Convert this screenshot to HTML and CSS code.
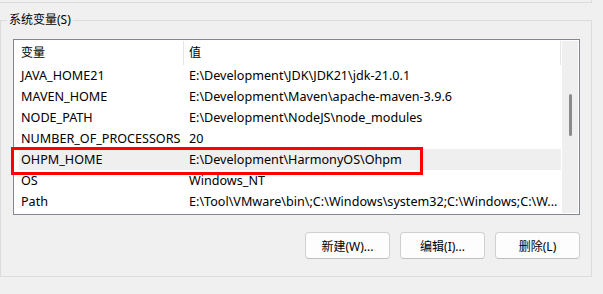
FILE: index.html
```html
<!DOCTYPE html>
<html lang="zh-CN">
<head>
    <meta charset="UTF-8">
    <title>环境变量</title>
    <link rel="stylesheet" href="styles.css">
</head>
<body>
    <div class="prev-group"></div>

    <fieldset class="group">
        <legend>系统变量(S)</legend>

        <div class="listbox">
            <div class="list">
                <div class="list-head">
                    <div class="col-name">变量</div>
                    <div class="col-value">值</div>
                </div>
                <div class="row">
                    <div class="col-name">JAVA_HOME21</div>
                    <div class="col-value">E:\Development\JDK\JDK21\jdk-21.0.1</div>
                </div>
                <div class="row">
                    <div class="col-name">MAVEN_HOME</div>
                    <div class="col-value">E:\Development\Maven\apache-maven-3.9.6</div>
                </div>
                <div class="row">
                    <div class="col-name">NODE_PATH</div>
                    <div class="col-value">E:\Development\NodeJS\node_modules</div>
                </div>
                <div class="row">
                    <div class="col-name">NUMBER_OF_PROCESSORS</div>
                    <div class="col-value">20</div>
                </div>
                <div class="row selected">
                    <div class="col-name">OHPM_HOME</div>
                    <div class="col-value">E:\Development\HarmonyOS\Ohpm</div>
                    <span class="mark"></span>
                </div>
                <div class="row">
                    <div class="col-name">OS</div>
                    <div class="col-value">Windows_NT</div>
                </div>
                <div class="row">
                    <div class="col-name">Path</div>
                    <div class="col-value">E:\Tool\VMware\bin\;C:\Windows\system32;C:\Windows;C:\W...</div>
                </div>
            </div>
            <div class="scrollbar">
                <div class="thumb"></div>
            </div>
        </div>

        <div class="buttons">
            <button type="button">新建(W)...</button>
            <button type="button">编辑(I)...</button>
            <button type="button">删除(L)</button>
        </div>
    </fieldset>
</body>
</html>
```

FILE: styles.css
```css
body {
    margin: 0;
    background-color: #f0f0f0;
    font-family: 'Noto Sans', 'Noto Sans CJK SC', sans-serif;
    font-size: 12px;
    color: #000;
    width: 603px;
    height: 294px;
    overflow: hidden;
}

.prev-group {
    width: 591px;
    height: 2px;
    border-bottom: 1px solid #dcdcdc;
    border-right: 1px solid #dcdcdc;
}

.group {
    box-sizing: border-box;
    width: 592px;
    min-width: 0;
    margin: 9px 0 0 0;
    padding: 11px 11px 17px 12px;
    border: 1px solid #dcdcdc;
}

.group legend {
    margin-left: -6px;
    padding: 0 2px;
    line-height: 16px;
}

.listbox {
    display: flex;
    width: 567px;
    height: 176px;
    box-sizing: border-box;
    border: 1px solid #828790;
    padding: 1px;
    background: #fff;
}

.list {
    width: 547px;
}

.list-head {
    display: flex;
    height: 24px;
    line-height: 24px;
    padding-right: 1px;
}

.list-head .col-name {
    border-right: 1px solid #e5e5e5;
}

.list-head .col-value {
    flex: 1;
    border-right: 1px solid #e5e5e5;
}

.col-name {
    box-sizing: border-box;
    width: 169px;
    flex: none;
    padding-left: 6px;
    white-space: nowrap;
    overflow: hidden;
}

.col-value {
    box-sizing: border-box;
    padding-left: 5px;
    white-space: nowrap;
    overflow: hidden;
    text-overflow: ellipsis;
}

.row {
    position: relative;
    display: flex;
    height: 21px;
    line-height: 21px;
    font-size: 12.6px;
}

.row .col-value {
    flex: 1;
    min-width: 0;
}

.row.selected {
    background: linear-gradient(to right, #fff 4px, #efefef 4px, #efefef 546px, #fff 546px);
}

.mark {
    position: absolute;
    left: -4px;
    top: -2px;
    width: 412px;
    height: 28px;
    box-sizing: border-box;
    border: 3px solid #f00;
}

.scrollbar {
    width: 16px;
    background: #efefef;
    display: flex;
    justify-content: center;
}

.thumb {
    width: 3px;
    height: 42px;
    margin-top: 53px;
    margin-left: 1px;
    border-radius: 2px;
    background: #8b8b8b;
}

.buttons {
    display: flex;
    justify-content: flex-end;
    gap: 10px;
    margin-top: 17px;
    width: 567px;
}

button {
    box-sizing: border-box;
    width: 85px;
    height: 27px;
    padding: 0;
    font-family: 'Noto Sans', 'Noto Sans CJK SC', sans-serif;
    font-size: 12px;
    color: #000;
    background: #fdfdfd;
    border: 1px solid #d0d0d0;
    border-bottom-color: #c0c0c0;
    border-radius: 4px;
}
```
